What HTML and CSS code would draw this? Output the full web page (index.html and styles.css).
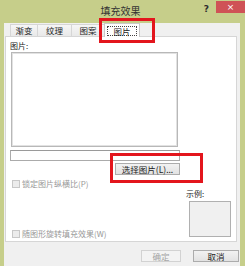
FILE: index.html
```html
<!DOCTYPE html>
<html>
<head>
<meta charset="utf-8">
<link rel="stylesheet" href="styles.css">
</head>
<body>
<div class="window">
  <div class="titlebar">
    <div class="spacer"></div>
    <div class="title">填充效果</div>
    <div class="controls">
      <div class="help">?</div>
      <div class="close">×</div>
    </div>
  </div>
  <div class="client">
    <div class="tabs">
      <div class="tab t1">渐变</div>
      <div class="tab t2">纹理</div>
      <div class="tab t3">图案</div>
      <div class="tab active"><span class="focus">图片</span></div>
    </div>
    <div class="panel">
      <div class="left">
        <div class="label">图片:</div>
        <div class="preview"></div>
        <div class="field"></div>
        <div class="btn choose">选择图片(L)...</div>
        <div class="check c1"><span class="box"></span><span>锁定图片纵横比(P)</span></div>
        <div class="check c2"><span class="box"></span><span>随图形旋转填充效果(W)</span></div>
      </div>
      <div class="right">
        <div class="label">示例:</div>
        <div class="sample"></div>
      </div>
    </div>
    <div class="actions">
      <div class="btn ok">确定</div>
      <div class="btn cancel">取消</div>
    </div>
  </div>
  <div class="hl hl-tab"></div>
  <div class="hl hl-btn"></div>
</div>
</body>
</html>
```

FILE: styles.css
```css
* { box-sizing: border-box; }
html, body {
  margin: 0;
  padding: 0;
  background: #c6ce8a;
}
body {
  font-family: "Noto Sans CJK SC", "Microsoft YaHei", sans-serif;
  font-size: 8px;
  color: #222;
}
.window {
  position: relative;
  width: 245px;
  height: 266px;
  overflow: hidden;
  background: #c6ce8a;
}
.titlebar {
  height: 23px;
  display: grid;
  grid-template-columns: 1fr auto 1fr;
}
.title {
  font-size: 10px;
  line-height: 22px;
  color: #333;
  padding-right: 4px;
}
.controls {
  display: flex;
  justify-content: flex-end;
  align-items: flex-start;
}
.help {
  font-family: "DejaVu Sans", sans-serif;
  font-weight: bold;
  font-size: 9px;
  line-height: 18px;
  color: #2e2e2e;
  margin-right: 7px;
}
.close {
  width: 29px;
  height: 12px;
  margin-top: 1px;
  background: #cf5256;
  color: #fff;
  font-family: "DejaVu Sans", sans-serif;
  font-size: 9px;
  line-height: 12px;
  text-align: center;
}
.client {
  margin-left: 4px;
  width: 236px;
  height: 243px;
  background: #f0f0f0;
}
.tabs {
  height: 13px;
  display: flex;
  align-items: flex-end;
  padding-left: 6px;
}
.tab {
  height: 12px;
  border: 1px solid #d6d6d6;
  border-bottom: none;
  background: linear-gradient(#f6f6f6, #e9e9e9);
  font-size: 8.5px;
  line-height: 11px;
  text-align: center;
  color: #222;
  margin-left: -1px;
}
.t1 { width: 28px; margin-left: 0; }
.t2 { width: 35px; }
.t3 { width: 34px; }
.tab.active {
  position: relative;
  z-index: 1;
  width: 36px;
  height: 14px;
  margin-bottom: -1px;
  background: #fff;
  border-color: #c9c9c9;
  padding-top: 2px;
}
.focus {
  display: block;
  margin: 0 2px;
  height: 10px;
  line-height: 8px;
  border: 1px dotted #444;
}
.panel {
  margin-left: 1px;
  width: 232px;
  height: 206px;
  border: 1px solid #d6d6d6;
  background: #fff;
  display: flex;
}
.left {
  width: 176px;
  padding-left: 4px;
  padding-bottom: 3px;
  display: flex;
  flex-direction: column;
}
.label {
  font-size: 8px;
  line-height: 9px;
  height: 9px;
  color: #222;
}
.left .label { margin-top: 4px; }
.preview {
  margin-top: 2px;
  margin-left: 1px;
  width: 167px;
  height: 95px;
  border: 1px solid #b8b8b8;
  box-shadow: inset 0 0 0 1px #e2e2e2;
  background: #fff;
}
.field {
  margin-top: 3px;
  width: 170px;
  height: 11px;
  border: 1px solid #ababab;
  border-top-color: #9a9a9a;
  background: #fff;
}
.btn {
  height: 12px;
  border: 1px solid #acacac;
  background: linear-gradient(#f2f2f2, #e2e2e2);
  font-size: 8.5px;
  line-height: 10px;
  text-align: center;
  color: #222;
}
.choose {
  margin-top: 2px;
  margin-left: 105px;
  width: 65px;
}
.check {
  display: flex;
  align-items: center;
  gap: 2px;
  height: 9px;
  margin-left: 2px;
  font-size: 8px;
  line-height: 9px;
  color: #979797;
}
.check .box {
  width: 8px;
  height: 8px;
  border: 1px solid #c8c8c8;
  background: #ececec;
}
.c1 { margin-top: 4px; }
.c2 { margin-top: auto; }
.right {
  flex: 1;
  display: flex;
  flex-direction: column;
  justify-content: flex-end;
  padding-bottom: 4px;
}
.right .label { padding-left: 4px; }
.sample {
  margin-top: 3px;
  margin-left: 7px;
  width: 42px;
  height: 36px;
  border: 1px solid #b0b0b0;
  background: #f0f0f0;
}
.actions {
  margin-top: 8px;
  display: flex;
}
.ok {
  margin-left: 137px;
  width: 40px;
  border-color: #d2d2d2;
  background: #f3f3f3;
  color: #a3a3a3;
}
.cancel {
  margin-left: 12px;
  width: 46px;
}
.hl {
  position: absolute;
  border: 3px solid #e3151d;
}
.hl-tab {
  left: 99px;
  top: 18px;
  width: 56px;
  height: 25px;
}
.hl-btn {
  left: 110px;
  top: 153px;
  width: 93px;
  height: 30px;
}
```
